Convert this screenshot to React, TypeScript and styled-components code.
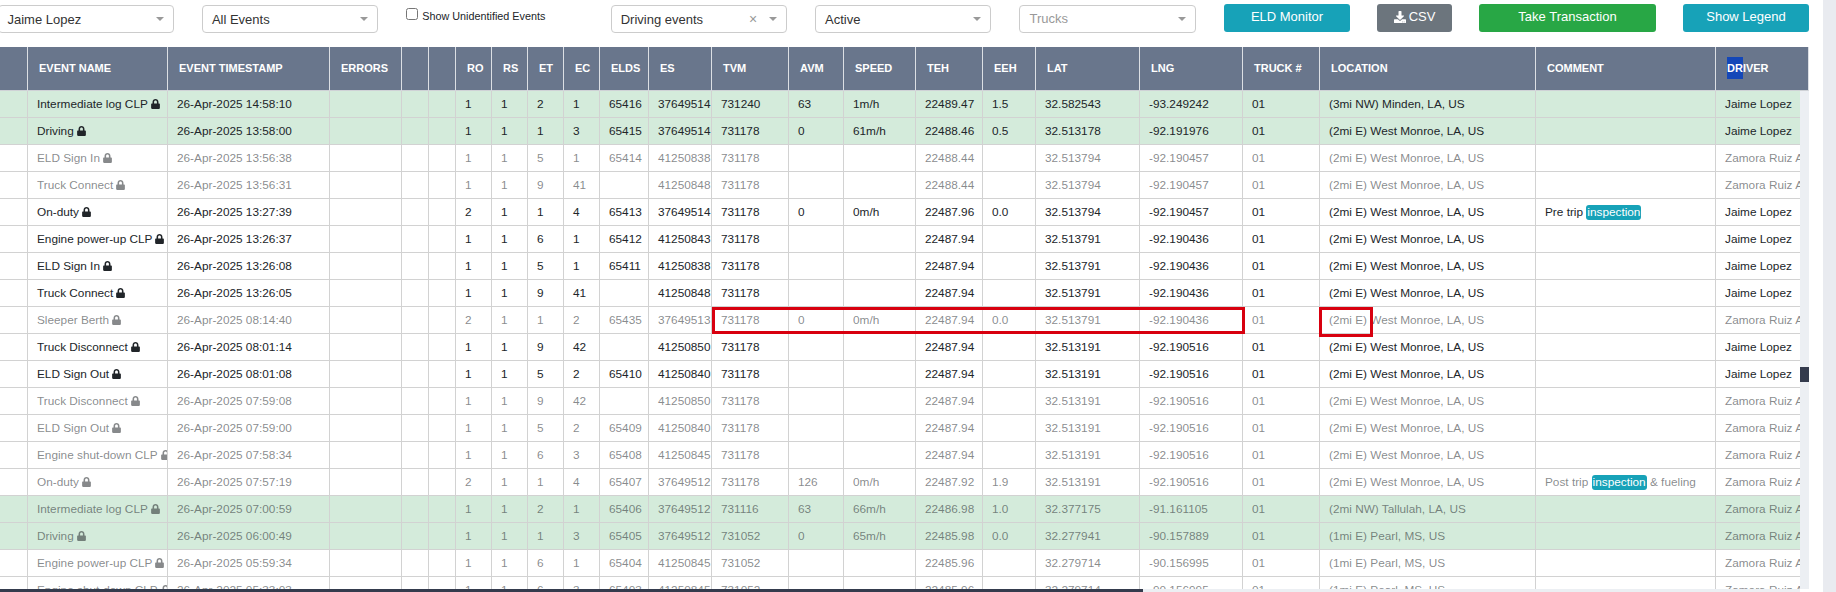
import React from 'react';
import styled, { createGlobalStyle } from 'styled-components';
import { FaLock, FaDownload } from 'react-icons/fa';

const GlobalStyle = createGlobalStyle`
    html, body {
        margin: 0;
        padding: 0;
        background: #fff;
        overflow: hidden;
    }
    body {
        font-family: "Liberation Sans", Arial, sans-serif;
        color: #212529;
    }
`;

const Page = styled.div`
    width: 1836px;
    height: 592px;
    display: flex;
    overflow: hidden;
`;

const Main = styled.div`
    width: 1823px;
    display: flex;
    flex-direction: column;
`;

const RightStrip = styled.div`
    width: 13px;
    background: #e9ebf0;
`;

const Toolbar = styled.div`
    height: 47px;
    width: 1811.5px;
    box-sizing: border-box;
    padding-top: 4px;
    margin-left: -2.5px;
    display: flex;
    gap: 28px;
`;

const SelectBox = styled.div`
    width: 176.4px;
    height: 28px;
    margin-top: 1px;
    box-sizing: border-box;
    border: 1px solid #ccc;
    border-radius: 4px;
    padding-left: 9px;
    padding-right: 9px;
    display: flex;
    align-items: center;
    gap: 8px;
    background: #fff;
    font-size: 13px;
`;

const SelectValue = styled.span<{ $placeholder?: boolean }>`
    flex: 1;
    color: ${props => (props.$placeholder ? '#999' : '#333')};
    margin-top: ${props => (props.$placeholder ? '-2px' : '0')};
`;

const ClearMark = styled.span`
    font-size: 14px;
    line-height: 14px;
    color: #999;
    margin-right: 4px;
`;

const Caret = styled.span`
    width: 0;
    height: 0;
    border-left: 4px solid transparent;
    border-right: 4px solid transparent;
    border-top: 4px solid #999;
`;

const CheckLabel = styled.label`
    width: 176.4px;
    height: 24px;
    display: flex;
    align-items: center;
    gap: 4px;
    font-size: 10.8px;
    color: #212529;
`;

const CheckInput = styled.input`
    margin: 0;
    width: 12px;
    height: 12px;
    position: relative;
    top: -2px;
`;

const ButtonGroup = styled.div`
    margin-left: auto;
    display: flex;
    gap: 27px;
`;

const ActionButton = styled.button<{ $width: number; $bg: string }>`
    width: ${props => props.$width}px;
    height: 28px;
    box-sizing: border-box;
    border: none;
    border-radius: 3px;
    padding: 0 0 3px;
    background: ${props => props.$bg};
    color: #fff;
    font-family: "Liberation Sans", Arial, sans-serif;
    font-size: 13px;
    display: flex;
    align-items: center;
    justify-content: center;
    gap: 3px;
`;

const TableFrame = styled.div`
    width: 1809px;
    flex: 1;
    display: flex;
    flex-direction: column;
    min-height: 0;
`;

const GridTable = styled.table`
    width: 1809px;
    table-layout: fixed;
    border-collapse: separate;
    border-spacing: 0;
`;

const HeaderCell = styled.th`
    height: 44px;
    box-sizing: border-box;
    padding: 0 0 1px 11px;
    background: #69768c;
    color: #fff;
    font-size: 11px;
    font-weight: bold;
    text-align: left;
    white-space: nowrap;
    overflow: hidden;
    border-right: 1px solid #dcdfe4;
    border-bottom: 1px solid #cfd2d6;
`;

const SelectedText = styled.span`
    display: inline-block;
    background: #1447b8;
    line-height: 22px;
`;

const BodyRow = styled.div`
    height: 498px;
    display: flex;
`;

const BodyScroll = styled.div`
    width: 1800px;
    height: 498px;
    overflow: hidden;
    position: relative;
`;

const DataRow = styled.tr<{ $driving?: boolean; $muted?: boolean }>`
    background: ${props => (props.$driving ? '#d4ebdb' : '#fff')};
    color: ${props => (props.$muted ? 'rgba(33, 37, 41, 0.54)' : '#212529')};
`;

const DataCell = styled.td`
    height: 27px;
    box-sizing: border-box;
    padding: 0 0 0 9px;
    font-size: 11.8px;
    white-space: nowrap;
    overflow: hidden;
    border-right: 1px solid #d2d2d2;
    border-bottom: 1px solid #d2d2d2;
`;

const LockIcon = styled(FaLock)`
    width: 9px;
    height: 10px;
    margin-left: 3px;
    vertical-align: -1px;
`;

const Badge = styled.span`
    display: inline-block;
    background: #17a2b8;
    color: #fff;
    border-radius: 3px;
    padding: 0 1px;
    line-height: 15px;
`;

const RowHighlight = styled.div`
    position: absolute;
    left: 712px;
    top: 216px;
    width: 533px;
    height: 27px;
    box-sizing: border-box;
    border: 3px solid #d8000f;
    pointer-events: none;
`;

const CellHighlight = styled.div`
    position: absolute;
    left: 1319px;
    top: 216px;
    width: 54px;
    height: 30px;
    box-sizing: border-box;
    border: 3px solid #d8000f;
    pointer-events: none;
`;

const VerticalTrack = styled.div`
    width: 9px;
    background: #eceff3;
    padding-top: 276px;
`;

const VerticalThumb = styled.div`
    height: 15px;
    background: #343b4d;
`;

const HorizontalTrack = styled.div`
    width: 1800px;
    height: 3px;
    background: #eceff3;
`;

const HorizontalThumb = styled.div`
    width: 1143px;
    height: 3px;
    background: #343b4d;
`;

const columnWidths = [28, 140, 162, 72, 27, 27, 36, 36, 36, 36, 49, 63, 77, 55, 72, 67, 53, 104, 103, 77, 216, 180, 93];

const headers = ['', 'EVENT NAME', 'EVENT TIMESTAMP', 'ERRORS', '', '', 'RO', 'RS', 'ET', 'EC', 'ELDS', 'ES', 'TVM', 'AVM', 'SPEED', 'TEH', 'EEH', 'LAT', 'LNG', 'TRUCK #', 'LOCATION', 'COMMENT'];

interface EventRow {
    name: string;
    time: string;
    codes: string[];
    elds: string;
    es: string;
    tvm: string;
    avm: string;
    speed: string;
    teh: string;
    eeh: string;
    lat: string;
    lng: string;
    location: string;
    comment?: React.ReactNode;
    driving?: boolean;
    muted?: boolean;
}

const WM = '(2mi E) West Monroe, LA, US';
const PEARL = '(1mi E) Pearl, MS, US';

const rows: EventRow[] = [
    { name: 'Intermediate log CLP', time: '14:58:10', codes: ['1', '1', '2', '1'], elds: '65416', es: '37649514', tvm: '731240', avm: '63', speed: '1m/h', teh: '22489.47', eeh: '1.5', lat: '32.582543', lng: '-93.249242', location: '(3mi NW) Minden, LA, US', driving: true },
    { name: 'Driving', time: '13:58:00', codes: ['1', '1', '1', '3'], elds: '65415', es: '37649514', tvm: '731178', avm: '0', speed: '61m/h', teh: '22488.46', eeh: '0.5', lat: '32.513178', lng: '-92.191976', location: WM, driving: true },
    { name: 'ELD Sign In', time: '13:56:38', codes: ['1', '1', '5', '1'], elds: '65414', es: '41250838', tvm: '731178', avm: '', speed: '', teh: '22488.44', eeh: '', lat: '32.513794', lng: '-92.190457', location: WM, muted: true },
    { name: 'Truck Connect', time: '13:56:31', codes: ['1', '1', '9', '41'], elds: '', es: '41250848', tvm: '731178', avm: '', speed: '', teh: '22488.44', eeh: '', lat: '32.513794', lng: '-92.190457', location: WM, muted: true },
    { name: 'On-duty', time: '13:27:39', codes: ['2', '1', '1', '4'], elds: '65413', es: '37649514', tvm: '731178', avm: '0', speed: '0m/h', teh: '22487.96', eeh: '0.0', lat: '32.513794', lng: '-92.190457', location: WM, comment: <>Pre trip <Badge>inspection</Badge></> },
    { name: 'Engine power-up CLP', time: '13:26:37', codes: ['1', '1', '6', '1'], elds: '65412', es: '41250843', tvm: '731178', avm: '', speed: '', teh: '22487.94', eeh: '', lat: '32.513791', lng: '-92.190436', location: WM },
    { name: 'ELD Sign In', time: '13:26:08', codes: ['1', '1', '5', '1'], elds: '65411', es: '41250838', tvm: '731178', avm: '', speed: '', teh: '22487.94', eeh: '', lat: '32.513791', lng: '-92.190436', location: WM },
    { name: 'Truck Connect', time: '13:26:05', codes: ['1', '1', '9', '41'], elds: '', es: '41250848', tvm: '731178', avm: '', speed: '', teh: '22487.94', eeh: '', lat: '32.513791', lng: '-92.190436', location: WM },
    { name: 'Sleeper Berth', time: '08:14:40', codes: ['2', '1', '1', '2'], elds: '65435', es: '37649513', tvm: '731178', avm: '0', speed: '0m/h', teh: '22487.94', eeh: '0.0', lat: '32.513791', lng: '-92.190436', location: WM, muted: true },
    { name: 'Truck Disconnect', time: '08:01:14', codes: ['1', '1', '9', '42'], elds: '', es: '41250850', tvm: '731178', avm: '', speed: '', teh: '22487.94', eeh: '', lat: '32.513191', lng: '-92.190516', location: WM },
    { name: 'ELD Sign Out', time: '08:01:08', codes: ['1', '1', '5', '2'], elds: '65410', es: '41250840', tvm: '731178', avm: '', speed: '', teh: '22487.94', eeh: '', lat: '32.513191', lng: '-92.190516', location: WM },
    { name: 'Truck Disconnect', time: '07:59:08', codes: ['1', '1', '9', '42'], elds: '', es: '41250850', tvm: '731178', avm: '', speed: '', teh: '22487.94', eeh: '', lat: '32.513191', lng: '-92.190516', location: WM, muted: true },
    { name: 'ELD Sign Out', time: '07:59:00', codes: ['1', '1', '5', '2'], elds: '65409', es: '41250840', tvm: '731178', avm: '', speed: '', teh: '22487.94', eeh: '', lat: '32.513191', lng: '-92.190516', location: WM, muted: true },
    { name: 'Engine shut-down CLP', time: '07:58:34', codes: ['1', '1', '6', '3'], elds: '65408', es: '41250845', tvm: '731178', avm: '', speed: '', teh: '22487.94', eeh: '', lat: '32.513191', lng: '-92.190516', location: WM, muted: true },
    { name: 'On-duty', time: '07:57:19', codes: ['2', '1', '1', '4'], elds: '65407', es: '37649512', tvm: '731178', avm: '126', speed: '0m/h', teh: '22487.92', eeh: '1.9', lat: '32.513191', lng: '-92.190516', location: WM, muted: true, comment: <>Post trip <Badge>inspection</Badge> &amp; fueling</> },
    { name: 'Intermediate log CLP', time: '07:00:59', codes: ['1', '1', '2', '1'], elds: '65406', es: '37649512', tvm: '731116', avm: '63', speed: '66m/h', teh: '22486.98', eeh: '1.0', lat: '32.377175', lng: '-91.161105', location: '(2mi NW) Tallulah, LA, US', driving: true, muted: true },
    { name: 'Driving', time: '06:00:49', codes: ['1', '1', '1', '3'], elds: '65405', es: '37649512', tvm: '731052', avm: '0', speed: '65m/h', teh: '22485.98', eeh: '0.0', lat: '32.277941', lng: '-90.157889', location: PEARL, driving: true, muted: true },
    { name: 'Engine power-up CLP', time: '05:59:34', codes: ['1', '1', '6', '1'], elds: '65404', es: '41250845', tvm: '731052', avm: '', speed: '', teh: '22485.96', eeh: '', lat: '32.279714', lng: '-90.156995', location: PEARL, muted: true },
    { name: 'Engine shut-down CLP', time: '05:33:03', codes: ['1', '1', '6', '3'], elds: '65403', es: '41250845', tvm: '731052', avm: '', speed: '', teh: '22485.96', eeh: '', lat: '32.279714', lng: '-90.156995', location: PEARL, muted: true },
];

const Columns = () => (
    <colgroup>
        {columnWidths.map((w, i) => <col key={i} width={w} />)}
    </colgroup>
);

const App = () => (
    <Page>
        <GlobalStyle />
        <Main>
            <Toolbar>
                <SelectBox><SelectValue>Jaime Lopez</SelectValue><Caret /></SelectBox>
                <SelectBox><SelectValue>All Events</SelectValue><Caret /></SelectBox>
                <CheckLabel><CheckInput type="checkbox" />Show Unidentified Events</CheckLabel>
                <SelectBox><SelectValue>Driving events</SelectValue><ClearMark>×</ClearMark><Caret /></SelectBox>
                <SelectBox><SelectValue>Active</SelectValue><Caret /></SelectBox>
                <SelectBox><SelectValue $placeholder>Trucks</SelectValue><Caret /></SelectBox>
                <ButtonGroup>
                    <ActionButton $width={126} $bg="#17a2b8">ELD Monitor</ActionButton>
                    <ActionButton $width={75} $bg="#6c757d"><FaDownload size={12} />CSV</ActionButton>
                    <ActionButton $width={177} $bg="#28a745">Take Transaction</ActionButton>
                    <ActionButton $width={126} $bg="#17a2b8">Show Legend</ActionButton>
                </ButtonGroup>
            </Toolbar>
            <TableFrame>
                <GridTable>
                    <Columns />
                    <thead>
                        <tr>
                            {headers.map((h, i) => <HeaderCell key={i}>{h}</HeaderCell>)}
                            <HeaderCell><SelectedText>DR</SelectedText>IVER</HeaderCell>
                        </tr>
                    </thead>
                </GridTable>
                <BodyRow>
                    <BodyScroll>
                        <GridTable>
                            <Columns />
                            <tbody>
                                {rows.map((r, i) => (
                                    <DataRow key={i} $driving={r.driving} $muted={r.muted}>
                                        <DataCell />
                                        <DataCell>{r.name}<LockIcon /></DataCell>
                                        <DataCell>26-Apr-2025 {r.time}</DataCell>
                                        <DataCell />
                                        <DataCell />
                                        <DataCell />
                                        {r.codes.map((c, j) => <DataCell key={j}>{c}</DataCell>)}
                                        <DataCell>{r.elds}</DataCell>
                                        <DataCell>{r.es}</DataCell>
                                        <DataCell>{r.tvm}</DataCell>
                                        <DataCell>{r.avm}</DataCell>
                                        <DataCell>{r.speed}</DataCell>
                                        <DataCell>{r.teh}</DataCell>
                                        <DataCell>{r.eeh}</DataCell>
                                        <DataCell>{r.lat}</DataCell>
                                        <DataCell>{r.lng}</DataCell>
                                        <DataCell>01</DataCell>
                                        <DataCell>{r.location}</DataCell>
                                        <DataCell>{r.comment}</DataCell>
                                        <DataCell>{r.muted ? 'Zamora Ruiz Alejandro' : 'Jaime Lopez'}</DataCell>
                                    </DataRow>
                                ))}
                            </tbody>
                        </GridTable>
                        <RowHighlight />
                        <CellHighlight />
                    </BodyScroll>
                    <VerticalTrack><VerticalThumb /></VerticalTrack>
                </BodyRow>
                <HorizontalTrack><HorizontalThumb /></HorizontalTrack>
            </TableFrame>
        </Main>
        <RightStrip />
    </Page>
);

export default App;
